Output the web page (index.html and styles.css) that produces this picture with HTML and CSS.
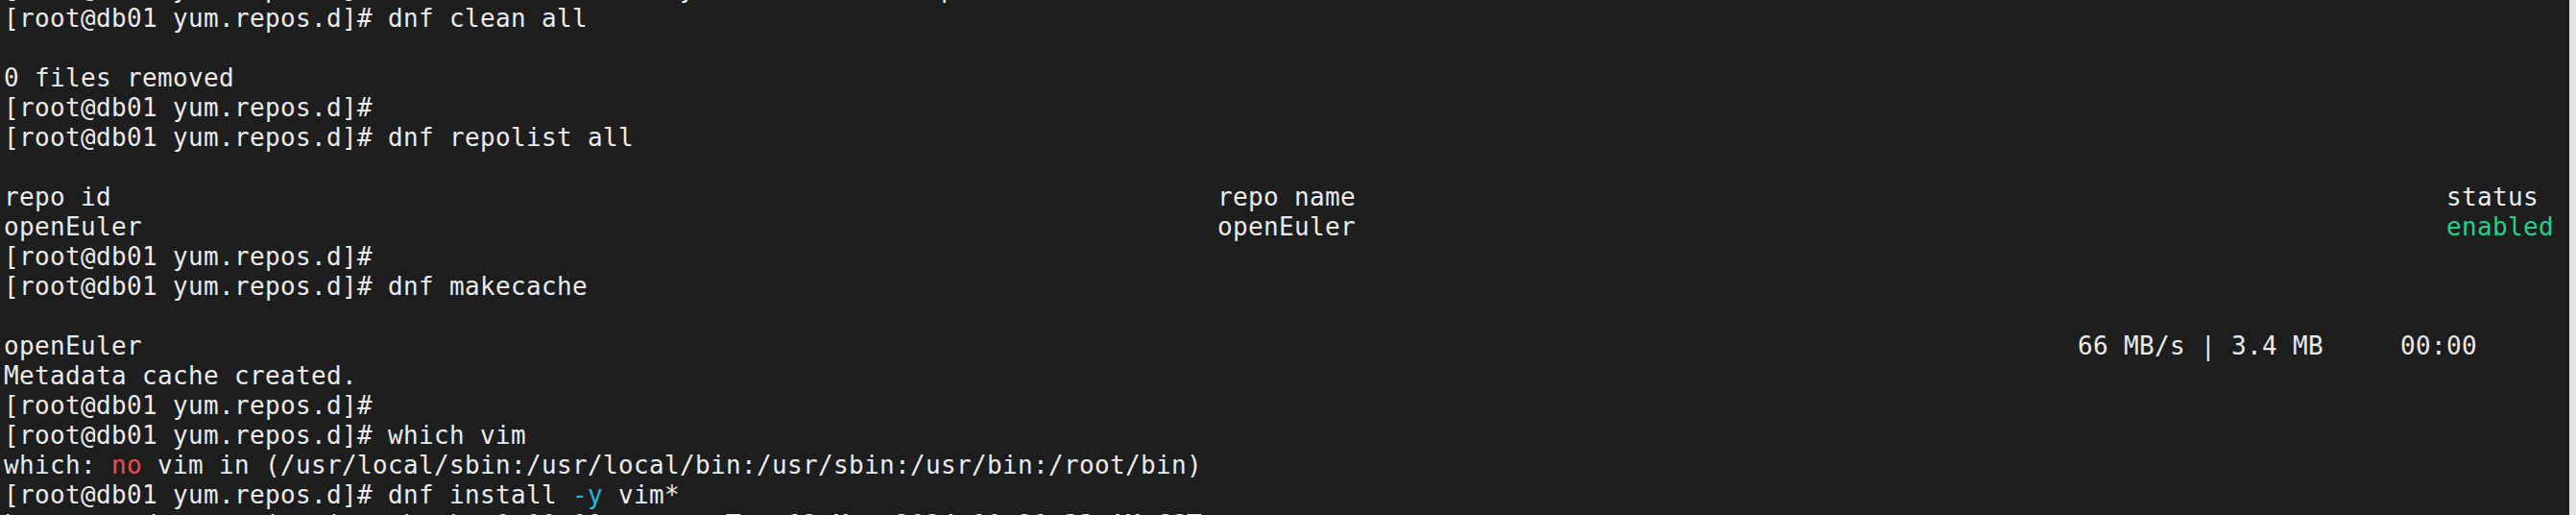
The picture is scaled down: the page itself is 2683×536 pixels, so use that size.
FILE: index.html
```html
<!DOCTYPE html>
<html lang="en">
<head>
<meta charset="utf-8">
<title>Terminal</title>
<link rel="stylesheet" href="styles.css">
</head>
<body>
<div class="screen">
  <div class="term">
    <div class="buffer">
<div class="line">[root@db01 yum.repos.d]# cd /etc/ &amp;&amp; rm -rf yum.bak &amp;&amp; mkdir pub</div>
<div class="line">[root@db01 yum.repos.d]# dnf clean all</div>
<div class="line"> </div>
<div class="line">0 files removed</div>
<div class="line">[root@db01 yum.repos.d]#</div>
<div class="line">[root@db01 yum.repos.d]# dnf repolist all</div>
<div class="line"> </div>
<div class="line">repo id                                                                        repo name                                                                       status</div>
<div class="line">openEuler                                                                      openEuler                                                                       <span class="green">enabled</span></div>
<div class="line">[root@db01 yum.repos.d]#</div>
<div class="line">[root@db01 yum.repos.d]# dnf makecache</div>
<div class="line"> </div>
<div class="line">openEuler                                                                                                                              66 MB/s | 3.4 MB     00:00</div>
<div class="line">Metadata cache created.</div>
<div class="line">[root@db01 yum.repos.d]#</div>
<div class="line">[root@db01 yum.repos.d]# which vim</div>
<div class="line">which: <span class="red">no</span> vim in (/usr/local/sbin:/usr/local/bin:/usr/sbin:/usr/bin:/root/bin)</div>
<div class="line">[root@db01 yum.repos.d]# dnf install <span class="cyan">-y</span> vim*</div>
<div class="line">Last metadata expiration check: 0:00:01 ago on Tue 12 Mar 2024 10:21:33 AM CST.</div>
    </div>
  </div>
  <div class="scrollbar"></div>
</div>
</body>
</html>
```
FILE: styles.css
```css
html, body {
  margin: 0;
  padding: 0;
  height: 100%;
  background: #1e1e1e;
}

.screen {
  display: flex;
  height: 536px;
  width: 2683px;
  overflow: hidden;
}

.term {
  flex: 1;
  overflow: hidden;
  background: #1e1e1e;
  padding-left: 4px;
}

.buffer {
  margin-top: -27.5px;
  font-family: "DejaVu Sans Mono", monospace;
  font-size: 26px;
  letter-spacing: 0.347px;
  line-height: 31px;
  color: #ebebeb;
}

.line {
  white-space: pre;
  height: 31px;
}

.green { color: #23d18b; }
.red { color: #f14c4c; }
.cyan { color: #29b8db; }

.scrollbar {
  width: 7px;
  background: #e3e3e3;
}
```
